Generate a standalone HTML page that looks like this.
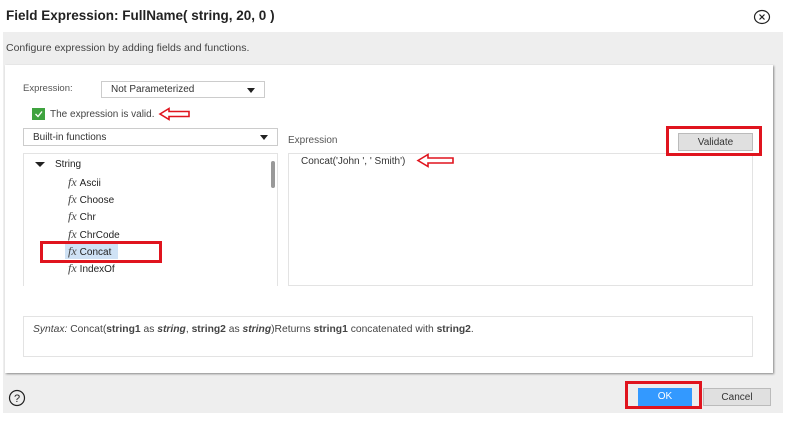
<!DOCTYPE html>
<html><head><meta charset="utf-8"><style>
*{box-sizing:border-box;margin:0;padding:0}
body{width:796px;height:421px;background:#fff;font-family:"Liberation Sans",sans-serif;color:#333;position:relative;overflow:hidden}
.a{position:absolute}
.t{font-size:10px;white-space:nowrap}
.sel{background:#fff;border:1px solid #ccc;font-size:10px;padding-left:9px;line-height:16px}
.sel:after{content:"";position:absolute;right:9px;top:6px;border-left:4px solid transparent;border-right:4px solid transparent;border-top:5px solid #222}
.fx{font-family:"Liberation Serif",serif;font-style:italic;font-size:12px;color:#444;margin-right:3px}
.item{position:absolute;left:68px;font-size:10px;color:#222;white-space:nowrap;line-height:14px}
.red{position:absolute;border:3px solid #e0141e}
</style></head><body>
<div class="a" style="left:6px;top:8px;font-size:13.5px;font-weight:bold;color:#222">Field Expression: FullName( string, 20, 0 )</div>
<svg class="a" style="left:753px;top:9px" width="18" height="16"><ellipse cx="9" cy="8" rx="7.5" ry="6.5" fill="none" stroke="#222" stroke-width="1.2"/><path d="M6.5 5.5l5 5M11.5 5.5l-5 5" stroke="#222" stroke-width="1.2"/></svg>
<div class="a" style="left:3px;top:32px;width:780px;height:381px;background:#eeeeee"></div>
<div class="a t" style="left:6px;top:42px;color:#444;font-size:10.5px">Configure expression by adding fields and functions.</div>
<div class="a" style="left:5px;top:65px;width:768px;height:308px;background:#fff;box-shadow:1px 1px 2px #888"></div>
<div class="a t" style="left:23px;top:83px;color:#555;font-size:9.5px">Expression:</div>
<div class="a sel" style="left:101px;top:81px;width:164px;height:17px">Not Parameterized</div>
<div class="a" style="left:32px;top:108px;width:13px;height:12px;background:#3fa33f"></div>
<svg class="a" style="left:32px;top:108px" width="13" height="12"><path d="M3.5 6l2.5 2.5 4-5" stroke="#fff" stroke-width="1.3" fill="none"/></svg>
<div class="a t" style="left:50px;top:109px;color:#444">The expression is valid.</div>
<svg class="a" style="left:158px;top:107px" width="34" height="14"><path d="M2 7L11 1.5V4.5H31V9.5H11V12.5Z" fill="none" stroke="#e0141e" stroke-width="1.6"/></svg>
<div class="a sel" style="left:23px;top:128px;width:255px;height:18px;line-height:17px">Built-in functions</div>
<div class="a t" style="left:288px;top:135px;color:#555">Expression</div>
<div class="a" style="left:23px;top:153px;width:255px;height:133px;border:1px solid #e3e3e3;border-bottom:none"></div>
<div class="a" style="left:271px;top:161px;width:4px;height:27px;background:#999;border-radius:2px"></div>
<div class="a" style="left:35px;top:162px;border-left:5px solid transparent;border-right:5px solid transparent;border-top:5px solid #222"></div>
<div class="a t" style="left:55px;top:159px;color:#222">String</div>
<div class="item" style="top:175px"><span class="fx">fx</span>Ascii</div>
<div class="item" style="top:192px"><span class="fx">fx</span>Choose</div>
<div class="item" style="top:209px"><span class="fx">fx</span>Chr</div>
<div class="item" style="top:227px"><span class="fx">fx</span>ChrCode</div>
<div class="a" style="left:65px;top:244px;width:53px;height:15px;background:#cfe2f5"></div>
<div class="item" style="top:244px"><span class="fx">fx</span>Concat</div>
<div class="item" style="top:261px"><span class="fx">fx</span>IndexOf</div>
<div class="a" style="left:24px;top:283px;width:253px;height:3px;background:#fff"></div>
<div class="red" style="left:40px;top:241px;width:122px;height:22px"></div>
<div class="a" style="left:288px;top:153px;width:465px;height:133px;border:1px solid #e3e3e3"></div>
<div class="a t" style="left:301px;top:156px;color:#333">Concat('John ', ' Smith')</div>
<svg class="a" style="left:416px;top:153px" width="40" height="15"><path d="M2 7.5L12 1.5V5H37V10H12V13.5Z" fill="none" stroke="#e0141e" stroke-width="1.6"/></svg>
<div class="a" style="left:678px;top:133px;width:75px;height:18px;background:#e0e0e0;border:1px solid #bbb;font-size:10px;text-align:center;line-height:17px;color:#333">Validate</div>
<div class="red" style="left:666px;top:126px;width:96px;height:30px"></div>
<div class="a" style="left:23px;top:316px;width:730px;height:41px;border:1px solid #e3e3e3"></div>
<div class="a t" style="left:33px;top:324px;color:#444;font-size:10.3px"><i>Syntax:</i> Concat(<b>string1</b> as <b><i>string</i></b>, <b>string2</b> as <b><i>string</i></b>)Returns <b>string1</b> concatenated with <b>string2</b>.</div>
<svg class="a" style="left:8px;top:389px" width="18" height="18"><circle cx="9" cy="9" r="7.5" fill="none" stroke="#222" stroke-width="1.2"/><text x="9" y="13" font-size="11" text-anchor="middle" font-family="Liberation Sans" fill="#222">?</text></svg>
<div class="a" style="left:638px;top:388px;width:54px;height:18px;background:#3399ff;color:#fff;font-size:10px;text-align:center;line-height:18px">OK</div>
<div class="red" style="left:625px;top:381px;width:77px;height:28px"></div>
<div class="a" style="left:703px;top:388px;width:68px;height:18px;background:#e0e0e0;border:1px solid #bbb;font-size:10px;text-align:center;line-height:17px;color:#333">Cancel</div>
</body></html>
